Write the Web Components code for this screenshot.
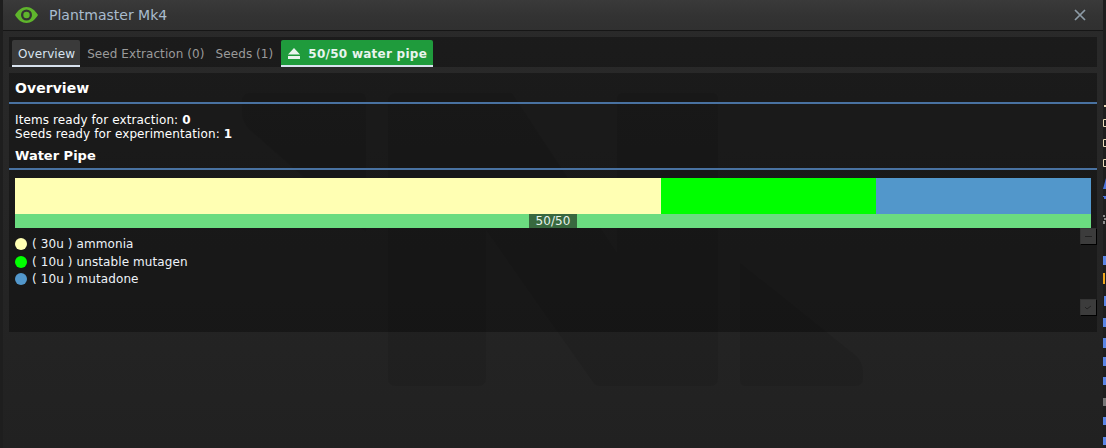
<!DOCTYPE html>
<html><head><meta charset="utf-8">
<style>
html,body{margin:0;padding:0;height:100%;background:#1e1e1e;overflow:hidden}
body{font:12px "DejaVu Sans","Liberation Sans",sans-serif;color:#fff}
b{font-weight:700}
</style></head>
<body>
<nt-desktop>
  <nt-window>
    <nt-titlebar slot="title">Plantmaster Mk4</nt-titlebar>
    <nt-tabs>
      <nt-tab selected style="padding-right:5px">Overview</nt-tab>
      <nt-tab style="padding-left:7px;padding-right:5px">Seed Extraction (0)</nt-tab>
      <nt-tab style="padding-right:8px">Seeds (1)</nt-tab>
      <nt-tab green selected><nt-eject slot="icon"></nt-eject>50/50 water pipe</nt-tab>
    </nt-tabs>
    <nt-section>
      <nt-heading size="big">Overview</nt-heading>
      <nt-stats>
        <div>Items ready for extraction: <b>0</b></div>
        <div>Seeds ready for experimentation: <b>1</b></div>
      </nt-stats>
      <nt-heading size="small">Water Pipe</nt-heading>
      <nt-beaker>
        <nt-stack>
          <nt-seg style="flex:30;background:#ffffb3"></nt-seg>
          <nt-seg style="flex:10;background:#00ff00"></nt-seg>
          <nt-seg style="flex:10;background:#5297cb"></nt-seg>
        </nt-stack>
        <nt-progress>50/50</nt-progress>
        <nt-reagents>
          <nt-reagent style="height:18px" color="#ffffb3">( 30u ) ammonia</nt-reagent>
          <nt-reagent style="height:17px" color="#00ff00">( 10u ) unstable mutagen</nt-reagent>
          <nt-reagent style="height:17px" color="#5297cb">( 10u ) mutadone</nt-reagent>
        </nt-reagents>
        <nt-scroll slot="scroll"></nt-scroll>
      </nt-beaker>
    </nt-section>
  </nt-window>
</nt-desktop>
<script>
function def(name, css, html, init){
  customElements.define(name, class extends HTMLElement{
    constructor(){super();const r=this.attachShadow({mode:'open'});
      r.innerHTML='<style>'+css+'</style>'+html;}
    connectedCallback(){ if(init) init(this,this.shadowRoot); }
  });
}
const br=y=>'<path d="M3 '+y+'.5H0.500V'+(y+7)+'.5H3" fill="none" stroke="#e8d9b8"/>';
def('nt-desktop',
 ':host{display:flex;height:448px;width:1106px;overflow:hidden;background:#1e1e1e}'+
 '.l{width:3px;flex:none}.r{width:3px;flex:none;}'+
 'svg{display:block}',
 '<div class="l"></div><slot></slot><div class="r"><svg width="3" height="448">'+
 '<rect x="1" y="105" width="2" height="2" fill="#e8d9b8"/>'+br(119)+br(139)+br(159)+
 '<g fill="#4a72dc"><path d="M3 178L0 189H3Z"/><rect x="0" y="196" width="3" height="1"/><rect x="1" y="197" width="2" height="2"/></g>'+
 '<g fill="#8a8a8a"><rect x="0" y="215" width="2" height="2"/><rect x="1" y="218" width="2" height="2"/><rect x="0" y="221" width="2" height="3"/></g>'+
 '<g fill="#5a86e6"><rect x="0" y="256" width="3" height="9"/><rect x="1" y="296" width="2" height="10"/><rect x="0" y="318" width="3" height="9"/><rect x="0" y="338" width="3" height="10"/><rect x="0" y="357" width="3" height="9"/><rect x="0" y="377" width="3" height="8"/><rect x="0" y="417" width="3" height="8"/><rect x="0" y="437" width="3" height="8"/></g>'+
 '<rect x="0" y="273" width="2" height="11" fill="#f0a820"/><rect x="0" y="398" width="3" height="8" fill="#777"/></svg></div>');
def('nt-window',
 ':host{display:flex;flex-direction:column;flex:1;min-width:0;height:448px;position:relative;background:linear-gradient(#2a2a2a,#212121);overflow:hidden}'+
 '.mark{position:absolute;left:-3px;top:0;pointer-events:none}'+
 '.body{position:relative;flex:1;display:flex;flex-direction:column;padding:6px 6px 0 6px;gap:6px}',
 '<svg class="mark" width="1106" height="448"><g fill="#000" fill-opacity=".08">'+
 '<path d="M250 93H360Q366 93 366 99V232L250 130Q242 123 242 112V101Q242 93 250 93Z"/>'+
 '<path d="M396 93H512L617 253V99Q617 93 623 93H712Q718 93 718 99V378Q718 386 710 386H601Q595 386 593 382L486 230V378Q486 386 478 386H396Q388 386 388 378V101Q388 93 396 93Z"/>'+
 '<path d="M740 263L855 355Q863 362 863 372V378Q863 386 855 386H746Q740 386 740 380Z"/></g></svg>'+
 '<slot name="title"></slot><div class="body"><slot></slot></div>');
def('nt-titlebar',
 ':host{display:flex;align-items:center;flex:none;height:30px;box-sizing:content-box;background:linear-gradient(#3a3a3a,#333 50%,#303030);border-bottom:1px solid #161616;position:relative;color:#a9bccf;font-size:14px}'+
 '.eye{margin:0 11px 0 12px;flex:none;display:block}.t{flex:1;padding-top:0}.x{margin-right:17px;display:block}',
 '<svg class="eye" width="23" height="16" viewBox="0 0 23 16"><path fill="#5fb52c" fill-rule="evenodd" d="M0 8C3 3 7 0 11.500 0S20 3 23 8C20 13 16 16 11.500 16S3 13 0 8ZM11.500 2.500A5.500 5.500 0 1 0 11.500 13.500A5.500 5.500 0 1 0 11.500 2.500Z"/><circle cx="11.500" cy="8" r="3.200" fill="#5fb52c"/></svg>'+
 '<span class="t"><slot></slot></span>'+
 '<svg class="x" width="12" height="12" viewBox="0 0 12 12"><path d="M1 1L11 11M11 1L1 11" stroke="#8d9ba6" stroke-width="1.700"/></svg>');
def('nt-tabs',
 ':host{display:flex;flex:none;height:30px;box-sizing:border-box;padding:3px 3px 0;background:rgba(0,0,0,.33);gap:0}',
 '<slot></slot>');
def('nt-tab',
 ':host{display:flex;align-items:center;height:27px;box-sizing:border-box;padding:2px 6px 0;color:#9a9a9a;border-radius:2px 2px 0 0;border-bottom:2px solid transparent;white-space:nowrap;letter-spacing:.08px}'+
 ':host([selected]){background:#3a3a3a;color:#d7e3f0;border-bottom-color:#d8e2ee}'+
 ':host([green]){background:#1f9b3c;color:#e8f4ee;font-weight:700;padding:2px 6px 0 7px;letter-spacing:.26px}',
 '<slot name="icon"></slot><slot></slot>');
def('nt-eject',
 ':host{display:block;margin-right:8px}svg{display:block}',
 '<svg width="12" height="11" viewBox="0 0 12 11"><path fill="#e8f4ee" d="M6 0L12 6.500H0ZM0 8H12V11H0Z"/></svg>');
def('nt-section',
 ':host{display:flex;flex-direction:column;height:259px;box-sizing:border-box;background:rgba(0,0,0,.33);padding:0 6px;flex:none}',
 '<slot></slot>');
def('nt-heading',
 ':host{display:block;font-weight:700;margin:0 -6px;padding:0 6px;border-bottom:2px solid #4972a1;box-sizing:border-box}'+
 ':host([size=big]){font-size:14px;height:31px;line-height:30px;letter-spacing:.05px}'+
 ':host([size=small]){font-size:13px;height:24px;line-height:20px}',
 '<slot></slot>');
def('nt-stats',
 ':host{display:block;padding:9px 0 0;height:42px;box-sizing:border-box;line-height:14px;letter-spacing:.1px}',
 '<slot></slot>');
def('nt-beaker',
 ':host{display:block;position:relative;padding-top:8px;flex:1}',
 '<slot></slot><slot name="scroll"></slot>');
def('nt-stack',
 ':host{display:flex;height:36px}','<slot></slot>');
def('nt-seg',':host{display:block;min-width:0}','');
def('nt-progress',
 ':host{display:flex;justify-content:center;height:14px;background:#6bdc80;line-height:14px}'+
 'span{background:#38693f;padding:0 6px;color:#e6f2ea;font-size:12px;letter-spacing:.1px}',
 '<span><slot></slot></span>');
def('nt-reagents',
 ':host{display:block;padding-top:7px}','<slot></slot>');
def('nt-reagent',
 ':host{display:flex;align-items:center;color:#eef3f8;letter-spacing:.1px}'+
 'i{width:12px;height:12px;border-radius:50%;margin-right:5px;flex:none}',
 '<i></i><span><slot></slot></span>',
 (h,r)=>{r.querySelector('i').style.background=h.getAttribute('color');});
def('nt-scroll',
 ':host{position:absolute;right:-6px;top:58px;width:17px;height:88px;display:flex;flex-direction:column;justify-content:space-between;background:rgba(255,255,255,.012)}'+
 '.b{width:17px;height:17px;box-sizing:border-box;background:#3c3c3c;border-right:1px solid #000;border-bottom:1px solid #000;border-top:1px solid #353535;border-left:1px solid #353535;display:flex;align-items:center;justify-content:center}svg{display:block}',
 '<div class="b"><svg width="9" height="9"><rect x="1" y="4" width="7" height="1" fill="#222"/></svg></div>'+
 '<div class="b"><svg width="9" height="9"><path d="M1 4L3 6L7 3" fill="none" stroke="#222"/></svg></div>');
</script>
</body></html>
